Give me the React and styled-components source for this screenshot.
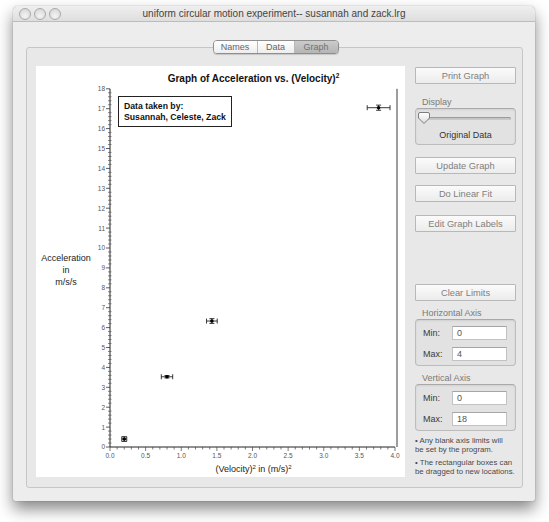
import React from 'react'
import styled, { createGlobalStyle } from 'styled-components'

const GlobalStyle = createGlobalStyle`
  html, body { margin: 0; padding: 0; background: #fff; }
  body { font-family: "Liberation Sans", Arial, sans-serif; }
`

const Page = styled.div`
  width: 549px;
  height: 522px;
  box-sizing: border-box;
  padding: 6px 14px 0 13px;
  background: #fff;
`

const Window = styled.div`
  width: 522px;
  height: 495px;
  display: flex;
  flex-direction: column;
  border-radius: 5px 5px 2px 2px;
  background: #ededed;
  box-shadow: 0 8px 16px rgba(0, 0, 0, 0.48), 0 0 1px rgba(0, 0, 0, 0.55);
  overflow: hidden;
`

const TitleBar = styled.div`
  flex: none;
  height: 15px;
  position: relative;
  display: flex;
  align-items: center;
  justify-content: center;
  background: linear-gradient(#efefef, #dedede);
  border-bottom: 1px solid #bcbcbc;
`

const Lights = styled.div`
  position: absolute;
  left: 6px;
  top: 2px;
  display: flex;
  gap: 3px;
`

const Light = styled.span`
  width: 10px;
  height: 10px;
  border-radius: 50%;
  border: 1px solid #a9a9a9;
  background: radial-gradient(circle at 50% 70%, #f4f4f4, #d2d2d2);
`

const Title = styled.div`
  font-size: 10px;
  color: #444;
`

const Body = styled.div`
  flex: 1;
  display: flex;
  flex-direction: column;
  padding: 18px 12px 13px 13px;
  min-height: 0;
`

const TabStrip = styled.div`
  display: flex;
  justify-content: center;
  margin-bottom: -7px;
  position: relative;
  z-index: 1;
`

const Segments = styled.div`
  display: flex;
  height: 14px;
  border: 1px solid #8e8e8e;
  border-radius: 4px;
  overflow: hidden;
  box-sizing: border-box;
  margin-left: 2px;
  box-shadow: 0 1px 1px rgba(0, 0, 0, 0.15);
`

const Segment = styled.div`
  width: ${p => p.$w}px;
  display: flex;
  align-items: center;
  justify-content: center;
  font-size: 9px;
  color: ${p => (p.$active ? '#727272' : '#666')};
  background: ${p => (p.$active ? 'linear-gradient(#cbcbcb, #b5b5b5)' : 'linear-gradient(#ffffff, #eeeeee)')};
  border-left: ${p => (p.$first ? 'none' : '1px solid #b9b9b9')};
`

const TabBox = styled.div`
  flex: 1;
  display: flex;
  gap: 10px;
  padding: 18px 5px 10px 9px;
  border: 1px solid #c6c6c6;
  border-radius: 3px;
  background: #e8e8e8;
  min-height: 0;
`

const GraphPanel = styled.div`
  position: relative;
  width: 369px;
  flex: none;
  background: #fff;
  display: grid;
  grid-template-columns: 60px 309px;
  grid-template-rows: 18px 378px auto;
`

const ChartTitle = styled.div`
  grid-column: 2;
  grid-row: 1;
  padding: 7px 0 0 6px;
  text-align: center;
  font-size: 10px;
  line-height: 12px;
  font-weight: bold;
  color: #111;
  white-space: nowrap;
  sup { font-size: 6.5px; vertical-align: 4px; line-height: 0; }
`

const YLabel = styled.div`
  grid-column: 1;
  grid-row: 2;
  align-self: center;
  padding: 0 0 6px 0;
  text-align: center;
  font-size: 9px;
  line-height: 12px;
  color: #222;
`

const Plot = styled.svg`
  grid-column: 2;
  grid-row: 2;
  display: block;
  font-family: "Liberation Sans", Arial, sans-serif;
`

const XLabel = styled.div`
  grid-column: 2;
  grid-row: 3;
  padding-left: 6px;
  text-align: center;
  font-size: 9px;
  line-height: 14px;
  color: #222;
  sup { font-size: 6px; vertical-align: 3px; line-height: 0; }
`

const Legend = styled.div`
  position: absolute;
  left: 82px;
  top: 30px;
  padding: 4px 5px 3px 5px;
  border: 1px solid #222;
  background: #fff;
  font-size: 8.7px;
  line-height: 11px;
  font-weight: bold;
  color: #111;
  white-space: nowrap;
`

const Side = styled.div`
  width: 101px;
  flex: none;
  display: flex;
  flex-direction: column;
  padding-top: 1px;
`

const Button = styled.div`
  height: 17px;
  box-sizing: border-box;
  margin-top: ${p => p.$top || 0}px;
  display: flex;
  align-items: center;
  justify-content: center;
  border: 1px solid #b8b8b8;
  border-radius: 1px;
  background: linear-gradient(#fbfbfb, #ececec);
  font-size: 9.3px;
  color: #808080;
`

const GroupLabel = styled.div`
  margin-top: ${p => p.$top || 0}px;
  padding-left: 7px;
  font-size: 9px;
  line-height: 11px;
  color: #7a7a7a;
`

const Group = styled.div`
  box-sizing: border-box;
  height: ${p => p.$h}px;
  border: 1px solid #bcbcbc;
  border-top-color: #a9a9a9;
  border-radius: 4px;
  background: #e2e2e2;
  box-shadow: inset 0 1px 2px rgba(0, 0, 0, 0.08);
  padding: ${p => p.$pad || '6px 7px'};
  display: flex;
  flex-direction: column;
  gap: ${p => p.$gap || 7}px;
`

const SliderRow = styled.div`
  position: relative;
  height: 12px;
  display: flex;
  align-items: center;
`

const Track = styled.div`
  flex: 1;
  height: 3px;
  border-radius: 2px;
  background: #c9c9c9;
  box-shadow: inset 0 1px 1px rgba(0, 0, 0, 0.25);
`

const Thumb = styled.svg`
  position: absolute;
  left: -3px;
  top: -1px;
`

const GroupValue = styled.div`
  text-align: center;
  font-size: 9px;
  color: #333;
`

const FieldRow = styled.div`
  display: flex;
  align-items: center;
  gap: 9px;
  height: 14px;
`

const FieldName = styled.span`
  width: 20px;
  font-size: 9px;
  color: #3a3a3a;
`

const Field = styled.div`
  width: 55px;
  height: 14px;
  box-sizing: border-box;
  padding-left: 4px;
  display: flex;
  align-items: center;
  background: #fff;
  border: 1px solid #c2c2c2;
  border-top-color: #a5a5a5;
  font-size: 9px;
  color: #555;
`

const Notes = styled.div`
  margin-top: 5px;
  display: flex;
  flex-direction: column;
  gap: 4px;
  font-size: 7.8px;
  line-height: 9px;
  color: #4a4a4a;
  white-space: nowrap;
`

const X0 = 14
const Y0 = 363
const SX = 71.25
const SY = 19.9
const sx = v => X0 + v * SX
const sy = v => Y0 - v * SY

const points = [
  { x: 0.2, y: 0.4, xe: 0.035, ye: 0.12 },
  { x: 0.8, y: 3.53, xe: 0.08, ye: 0.06 },
  { x: 1.43, y: 6.33, xe: 0.075, ye: 0.12 },
  { x: 3.77, y: 17.05, xe: 0.16, ye: 0.13 },
]

function Chart() {
  const yTicks = []
  for (let i = 0; i <= 90; i++) {
    const y = sy(i / 5)
    if (i % 5 === 0) {
      yTicks.push(<line key={'ym' + i} x1={X0 - 4} x2={X0} y1={y} y2={y} stroke="#333" strokeWidth="0.8" />)
      yTicks.push(
        <text key={'yl' + i} x={X0 - 5} y={y + 2.4} textAnchor="end" fontSize="6.5" fill="#555">
          {i / 5}
        </text>
      )
    } else {
      yTicks.push(<line key={'yn' + i} x1={X0 - 2} x2={X0 + 1.5} y1={y} y2={y} stroke="#555" strokeWidth="0.7" />)
    }
  }
  const xTicks = []
  for (let i = 0; i <= 40; i++) {
    const x = sx(i / 10)
    const major = i % 5 === 0
    xTicks.push(<line key={'xt' + i} x1={x} x2={x} y1={Y0} y2={Y0 + (major ? 4 : 2.5)} stroke="#444" strokeWidth="0.7" />)
    if (major) {
      xTicks.push(
        <text key={'xl' + i} x={x} y={Y0 + 11} textAnchor="middle" fontSize="6.5" fill="#555">
          {(i / 10).toFixed(1)}
        </text>
      )
    }
  }
  return (
    <Plot width="309" height="378" viewBox="0 0 309 378">
      <rect x={sx(4) + 1} y={sy(18)} width="2" height={Y0 - sy(18)} fill="#9d9d9d" />
      <line x1={X0} x2={X0} y1={sy(18)} y2={Y0} stroke="#222" strokeWidth="1" />
      <line x1={X0} x2={sx(4)} y1={Y0} y2={Y0} stroke="#222" strokeWidth="1" />
      {yTicks}
      {xTicks}
      {points.map((p, i) => {
        const cx = sx(p.x)
        const cy = sy(p.y)
        const l = sx(p.x - p.xe)
        const r = sx(p.x + p.xe)
        const t = sy(p.y + p.ye)
        const b = sy(p.y - p.ye)
        return (
          <g key={i} stroke="#222" strokeWidth="0.9">
            <line x1={l} x2={r} y1={cy} y2={cy} />
            <line x1={l} x2={l} y1={cy - 2.5} y2={cy + 2.5} />
            <line x1={r} x2={r} y1={cy - 2.5} y2={cy + 2.5} />
            <line x1={cx} x2={cx} y1={t} y2={b} />
            <line x1={cx - 2.5} x2={cx + 2.5} y1={t} y2={t} />
            <line x1={cx - 2.5} x2={cx + 2.5} y1={b} y2={b} />
            <circle cx={cx} cy={cy} r="1.8" fill="#000" stroke="none" />
          </g>
        )
      })}
    </Plot>
  )
}

export default function App() {
  return (
    <>
      <GlobalStyle />
      <Page>
        <Window>
          <TitleBar>
            <Lights>
              <Light />
              <Light />
              <Light />
            </Lights>
            <Title>uniform circular motion experiment-- susannah and zack.lrg</Title>
          </TitleBar>
          <Body>
            <TabStrip>
              <Segments>
                <Segment $w={43} $first>Names</Segment>
                <Segment $w={36}>Data</Segment>
                <Segment $w={43} $active>Graph</Segment>
              </Segments>
            </TabStrip>
            <TabBox>
              <GraphPanel>
                <ChartTitle>
                  Graph of Acceleration vs. (Velocity)<sup>2</sup>
                </ChartTitle>
                <YLabel>
                  Acceleration
                  <br />
                  in
                  <br />
                  m/s/s
                </YLabel>
                <Chart />
                <XLabel>
                  (Velocity)<sup>2</sup> in (m/s)<sup>2</sup>
                </XLabel>
                <Legend>
                  Data taken by:
                  <br />
                  Susannah, Celeste, Zack
                </Legend>
              </GraphPanel>
              <Side>
                <Button>Print Graph</Button>
                <GroupLabel $top={13}>Display</GroupLabel>
                <Group $h={37} $pad="3px 4px 4px 4px" $gap={6}>
                  <SliderRow>
                    <Track />
                    <Thumb width="14" height="14" viewBox="0 0 14 14">
                      <defs>
                        <linearGradient id="th" x1="0" y1="0" x2="0" y2="1">
                          <stop offset="0" stopColor="#ffffff" />
                          <stop offset="1" stopColor="#dcdcdc" />
                        </linearGradient>
                      </defs>
                      <path d="M3 1.5 H11 Q12.5 1.5 12.5 3 V7 L7 12.5 L1.5 7 V3 Q1.5 1.5 3 1.5 Z" fill="url(#th)" stroke="#6f6f6f" strokeWidth="0.9" />
                    </Thumb>
                  </SliderRow>
                  <GroupValue>Original Data</GroupValue>
                </Group>
                <Button $top={12}>Update Graph</Button>
                <Button $top={11}>Do Linear Fit</Button>
                <Button $top={13}>Edit Graph Labels</Button>
                <Button $top={52}>Clear Limits</Button>
                <GroupLabel $top={7}>Horizontal Axis</GroupLabel>
                <Group $h={47}>
                  <FieldRow>
                    <FieldName>Min:</FieldName>
                    <Field>0</Field>
                  </FieldRow>
                  <FieldRow>
                    <FieldName>Max:</FieldName>
                    <Field>4</Field>
                  </FieldRow>
                </Group>
                <GroupLabel $top={7}>Vertical Axis</GroupLabel>
                <Group $h={47}>
                  <FieldRow>
                    <FieldName>Min:</FieldName>
                    <Field>0</Field>
                  </FieldRow>
                  <FieldRow>
                    <FieldName>Max:</FieldName>
                    <Field>18</Field>
                  </FieldRow>
                </Group>
                <Notes>
                  <div>
                    • Any blank axis limits will
                    <br />
                    be set by the program.
                  </div>
                  <div>
                    • The rectangular boxes can
                    <br />
                    be dragged to new locations.
                  </div>
                </Notes>
              </Side>
            </TabBox>
          </Body>
        </Window>
      </Page>
    </>
  )
}
